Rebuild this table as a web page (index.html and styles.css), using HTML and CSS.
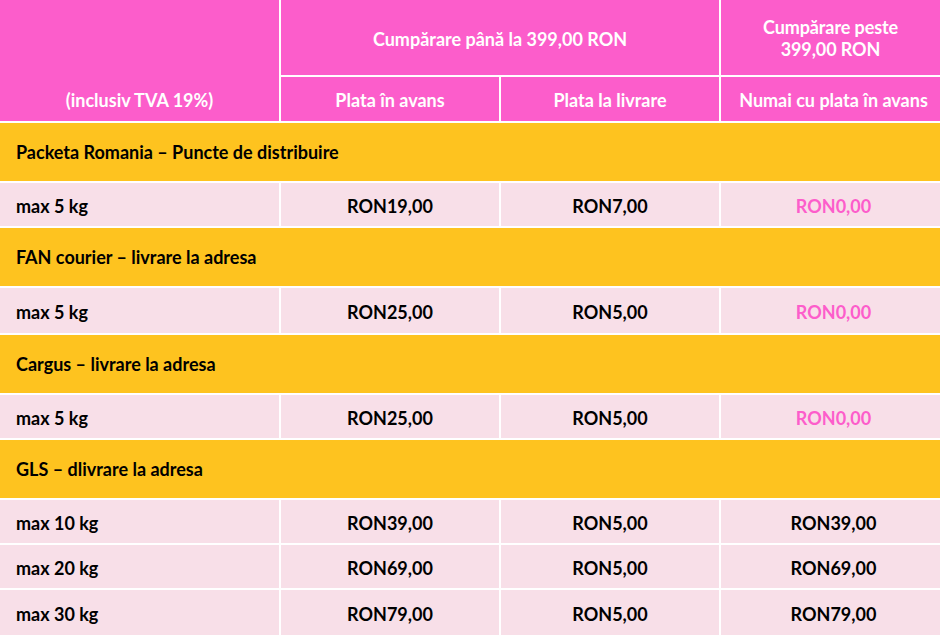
FILE: index.html
```html
<!DOCTYPE html>
<html lang="ro">
<head>
<meta charset="utf-8">
<title>Tarife livrare</title>
<link rel="stylesheet" href="styles.css">
</head>
<body>
<div class="rates">
  <div class="hd hd-first">(inclusiv TVA 19%)</div>
  <div class="hd hd-span">Cumpărare până la 399,00 RON</div>
  <div class="hd hd-wrap">Cumpărare peste<br>399,00 RON</div>
  <div class="hd">Plata în avans</div>
  <div class="hd">Plata la livrare</div>
  <div class="hd">Numai cu plata în avans</div>

  <div class="grp">Packeta Romania – Puncte de distribuire</div>
  <div class="c lbl">max 5 kg</div><div class="c">RON19,00</div><div class="c">RON7,00</div><div class="c free">RON0,00</div>

  <div class="grp">FAN courier – livrare la adresa</div>
  <div class="c lbl">max 5 kg</div><div class="c">RON25,00</div><div class="c">RON5,00</div><div class="c free">RON0,00</div>

  <div class="grp">Cargus – livrare la adresa</div>
  <div class="c lbl">max 5 kg</div><div class="c">RON25,00</div><div class="c">RON5,00</div><div class="c free">RON0,00</div>

  <div class="grp">GLS – dlivrare la adresa</div>
  <div class="c lbl">max 10 kg</div><div class="c">RON39,00</div><div class="c">RON5,00</div><div class="c">RON39,00</div>
  <div class="c lbl">max 20 kg</div><div class="c">RON69,00</div><div class="c">RON5,00</div><div class="c">RON69,00</div>
  <div class="c lbl">max 30 kg</div><div class="c">RON79,00</div><div class="c">RON5,00</div><div class="c">RON79,00</div>
</div>
</body>
</html>
```
FILE: styles.css
```css
html, body {
  margin: 0;
  padding: 0;
  background: #ffffff;
}
body {
  width: 940px;
  height: 635px;
  overflow: hidden;
  font-family: Lato, "Open Sans", "Liberation Sans", sans-serif;
  font-weight: 700;
  font-size: 18px;
}
.rates {
  display: grid;
  grid-template-columns: 279px 218px 218px 225px;
  grid-template-rows: 75px 44px 58px 43px 58px 45px 58px 43px 58px 43px 43px 45px;
  gap: 2px;
  background: #ffffff;
}
.hd {
  background: #fc5dcb;
  color: #ffffff;
  display: flex;
  align-items: center;
  justify-content: center;
  text-align: center;
  padding-top: 1px;
}
.hd-first {
  grid-row: span 2;
  align-items: flex-end;
  padding-bottom: 10px;
}
.hd-span {
  grid-column: span 2;
  padding-top: 3px;
}
.hd-wrap {
  line-height: 22px;
  padding-right: 6px;
  padding-top: 0;
  letter-spacing: -0.1px;
}
.hd-wrap + .hd ~ .hd:last-child {}
.grp {
  grid-column: 1 / -1;
  background: #fec31f;
  color: #000000;
  display: flex;
  align-items: center;
  padding-left: 16px;
}
.c {
  background: #f8dfe8;
  color: #000000;
  display: flex;
  align-items: center;
  justify-content: center;
  padding-top: 2px;
}
.lbl {
  justify-content: flex-start;
  padding-left: 16px;
}
.free {
  color: #fd5dcb;
}
```
